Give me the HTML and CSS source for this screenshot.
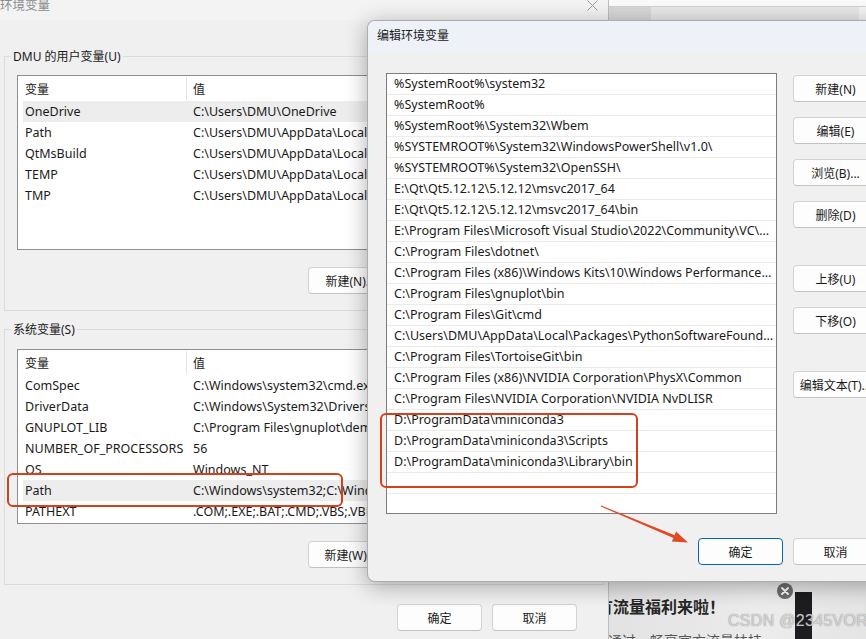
FILE: index.html
```html
<!DOCTYPE html>
<html lang="zh-CN">
<head>
    <meta charset="UTF-8">
    <title>编辑环境变量</title>
    <link rel="stylesheet" href="styles.css">
</head>
<body>
<div class="desk">

    <!-- background window: 环境变量 -->
    <div class="env">
        <div class="win-title">
            <span class="cjk">环境变量</span>
            <svg class="close" width="11" height="11" viewBox="0 0 11 11"><path d="M0.5 0.5L10.5 10.5M10.5 0.5L0.5 10.5" stroke="#9c9c9c" stroke-width="1"/></svg>
        </div>
        <div class="env-body">
            <fieldset class="group user">
                <legend>DMU <span class="cjk">的用户变量</span>(U)</legend>
                <div class="list">
                    <div class="head"><span class="c1 cjk">变量</span><span class="c2 cjk">值</span></div>
                    <div class="row sel"><span class="c1">OneDrive</span><span class="c2">C:\Users\DMU\OneDrive</span></div>
                    <div class="row"><span class="c1">Path</span><span class="c2">C:\Users\DMU\AppData\Local\Microsoft\WindowsApps;</span></div>
                    <div class="row"><span class="c1">QtMsBuild</span><span class="c2">C:\Users\DMU\AppData\Local\QtMsBuild</span></div>
                    <div class="row"><span class="c1">TEMP</span><span class="c2">C:\Users\DMU\AppData\Local\Temp</span></div>
                    <div class="row"><span class="c1">TMP</span><span class="c2">C:\Users\DMU\AppData\Local\Temp</span></div>
                </div>
                <div class="btn-row">
                    <button class="btn">新建(N)...</button>
                    <button class="btn">编辑(E)...</button>
                    <button class="btn">删除(D)</button>
                </div>
            </fieldset>

            <fieldset class="group sys">
                <legend><span class="cjk">系统变量</span>(S)</legend>
                <div class="list">
                    <div class="head"><span class="c1 cjk">变量</span><span class="c2 cjk">值</span></div>
                    <div class="row"><span class="c1">ComSpec</span><span class="c2">C:\Windows\system32\cmd.exe</span></div>
                    <div class="row"><span class="c1">DriverData</span><span class="c2">C:\Windows\System32\Drivers\DriverData</span></div>
                    <div class="row"><span class="c1">GNUPLOT_LIB</span><span class="c2">C:\Program Files\gnuplot\demo;C:\Program Files\gnuplot\demo\games</span></div>
                    <div class="row"><span class="c1">NUMBER_OF_PROCESSORS</span><span class="c2">56</span></div>
                    <div class="row"><span class="c1">OS</span><span class="c2">Windows_NT</span></div>
                    <div class="row sel"><span class="c1">Path</span><span class="c2">C:\Windows\system32;C:\Windows;C:\Windows\System32\Wbem</span></div>
                    <div class="row"><span class="c1">PATHEXT</span><span class="c2">.COM;.EXE;.BAT;.CMD;.VBS;.VBE;.JS;.JSE;.WSF;.WSH;.MSC</span></div>
                </div>
                <div class="btn-row">
                    <button class="btn">新建(W)...</button>
                    <button class="btn">编辑(I)...</button>
                    <button class="btn">删除(L)</button>
                </div>
            </fieldset>

            <div class="env-foot">
                <button class="btn">确定</button>
                <button class="btn">取消</button>
            </div>
        </div>
    </div>

    <!-- browser behind, right side -->
    <div class="browser">
        <div class="tabs"></div>
        <div class="toolbar"></div>
        <div class="page">
            <div class="promo-title">有流量福利来啦！</div>
            <div class="promo-sub">通过，畅享官方流量扶持</div>
            <div class="ad-close">
                <svg width="8" height="8" viewBox="0 0 8 8"><path d="M1 1L7 7M7 1L1 7" stroke="#fff" stroke-width="1.8" stroke-linecap="round"/></svg>
            </div>
            <div class="ad-bar"></div>
        </div>
    </div>

    <!-- dialog: 编辑环境变量 -->
    <div class="edit">
        <div class="edit-title">编辑环境变量</div>
        <div class="edit-body">
            <div class="edit-main">
                <div class="path-list">
                    <div class="item">%SystemRoot%\system32</div>
                    <div class="item">%SystemRoot%</div>
                    <div class="item">%SystemRoot%\System32\Wbem</div>
                    <div class="item">%SYSTEMROOT%\System32\WindowsPowerShell\v1.0\</div>
                    <div class="item">%SYSTEMROOT%\System32\OpenSSH\</div>
                    <div class="item">E:\Qt\Qt5.12.12\5.12.12\msvc2017_64</div>
                    <div class="item">E:\Qt\Qt5.12.12\5.12.12\msvc2017_64\bin</div>
                    <div class="item">E:\Program Files\Microsoft Visual Studio\2022\Community\VC\Tools\MSVC\14.36.32532\bin\Hostx64\x64</div>
                    <div class="item">C:\Program Files\dotnet\</div>
                    <div class="item">C:\Program Files (x86)\Windows Kits\10\Windows Performance Toolkit\</div>
                    <div class="item">C:\Program Files\gnuplot\bin</div>
                    <div class="item">C:\Program Files\Git\cmd</div>
                    <div class="item">C:\Users\DMU\AppData\Local\Packages\PythonSoftwareFoundation.Python.3.11_qbz5n2kfra8p0\LocalCache\local-packages\Python311\Scripts</div>
                    <div class="item">C:\Program Files\TortoiseGit\bin</div>
                    <div class="item">C:\Program Files (x86)\NVIDIA Corporation\PhysX\Common</div>
                    <div class="item">C:\Program Files\NVIDIA Corporation\NVIDIA NvDLISR</div>
                    <div class="item">D:\ProgramData\miniconda3</div>
                    <div class="item">D:\ProgramData\miniconda3\Scripts</div>
                    <div class="item">D:\ProgramData\miniconda3\Library\bin</div>
                    <div class="item"></div>
                </div>
                <div class="side-btns">
                    <button class="btn">新建(N)</button>
                    <button class="btn">编辑(E)</button>
                    <button class="btn">浏览(B)...</button>
                    <button class="btn">删除(D)</button>
                    <button class="btn spaced">上移(U)</button>
                    <button class="btn">下移(O)</button>
                    <button class="btn spaced">编辑文本(T)...</button>
                </div>
            </div>
            <div class="edit-foot">
                <button class="btn primary">确定</button>
                <button class="btn">取消</button>
            </div>
        </div>
    </div>

    <!-- annotations drawn on top of the screenshot -->
    <div class="mark mark-path"></div>
    <div class="mark mark-conda"></div>
    <svg class="arrow" width="866" height="639" viewBox="0 0 866 639">
        <polygon points="601.2,505.5 674.7,535.2 676.0,531.5 688,542.5 671.8,541.6 673.5,538.0 600.8,506.5" fill="#e04a24"/>
    </svg>
    <div class="watermark">CSDN @2345VOR</div>
</div>
</body>
</html>
```

FILE: styles.css
```css
body {
    margin: 0;
    font-family: "Noto Sans", "Noto Sans CJK SC", sans-serif;
    font-size: 12.5px;
    color: #1a1a1a;
    background: #f0f0f0;
}
.cjk {
    font-family: "Noto Sans CJK SC", sans-serif;
    font-size: 12px;
}
.desk {
    position: relative;
    width: 866px;
    height: 639px;
    overflow: hidden;
}

/* buttons */
.btn {
    width: 85px;
    height: 27px;
    box-sizing: border-box;
    padding: 0;
    border: 1px solid #d3d3d3;
    border-bottom-color: #c2c2c2;
    border-radius: 4px;
    background: #fdfdfd;
    font-family: "Noto Sans", "Noto Sans CJK SC", sans-serif;
    font-size: 12px;
    color: #1a1a1a;
    white-space: nowrap;
}
.btn.primary {
    border: 1px solid #0067c0;
}

/* background window */
.env {
    position: absolute;
    left: 0;
    top: -10px;
    width: 608px;
    height: 649px;
    background: #f0f0f0;
}
.win-title {
    height: 30px;
    display: flex;
    align-items: center;
    justify-content: space-between;
    padding-right: 10px;
    background: #f3f3f3;
    color: #8c8c8c;
}
.win-title .cjk {
    font-size: 12.5px;
    margin-top: -2px;
}
.env-body {
    padding: 28px 4px 0 4px;
}
.group {
    margin: 0;
    min-width: 0;
    border: 1px solid #dcdcdc;
    padding: 10px 22px 16px 12px;
}
.group.sys {
    margin-top: 10px;
    padding-top: 11px;
}
.group legend {
    padding: 0 2px;
    margin-left: -6px;
    line-height: 16px;
    font-size: 12px;
}
.list {
    height: 175px;
    box-sizing: border-box;
    border: 1px solid #8f8f8f;
    background: #fff;
    overflow: hidden;
}
.list .head {
    height: 25px;
    display: flex;
    align-items: center;
    padding-left: 7px;
}
.list .head .c1 {
    width: 161px;
    height: 23px;
    line-height: 23px;
    border-right: 1px solid #e3e3e3;
}
.list .head .c2 {
    padding-left: 6px;
}
.list .row {
    height: 21px;
    display: flex;
    align-items: center;
    margin-left: 5px;
    padding-left: 2px;
    white-space: nowrap;
}
.list .row.sel {
    background: #ededed;
}
.list .c1 {
    width: 168px;
    flex-shrink: 0;
}
.list .c2 {
    white-space: nowrap;
}
.btn-row {
    display: flex;
    justify-content: flex-end;
    gap: 9px;
    margin-top: 17px;
}
.env-foot {
    display: flex;
    justify-content: flex-end;
    gap: 10px;
    margin-top: 19px;
    padding-right: 27px;
}

/* browser window on the right */
.browser {
    position: absolute;
    left: 608px;
    top: 0;
    width: 258px;
    height: 639px;
    border-left: 1px solid #bdbdbd;
    display: flex;
    flex-direction: column;
}
.tabs {
    height: 6px;
    background: #fafafa;
    border-bottom: 1px solid #d2d2d2;
}
.toolbar {
    height: 13px;
    background: linear-gradient(90deg, #d8d8d8 0 42px, #e7e7e7 42px 250px, #f3f3f3 250px);
    border-bottom: 1px solid #a9a9a9;
}
.page {
    position: relative;
    flex: 1;
    display: flex;
    flex-direction: column;
    justify-content: flex-end;
    overflow: hidden;
    background: linear-gradient(90deg, #e2e2e2, #ececec 60%, #e4e4e4);
    font-family: "Noto Sans CJK SC", sans-serif;
}
.promo-title {
    margin-left: -12px;
    font-size: 16px;
    font-weight: bold;
    line-height: 20px;
    color: #262626;
}
.promo-sub {
    margin: 15px 0 -10px -1px;
    font-size: 14px;
    line-height: 18px;
    color: #555;
    white-space: nowrap;
}
.ad-close {
    position: absolute;
    left: 168px;
    bottom: 40px;
    width: 16px;
    height: 16px;
    border-radius: 50%;
    background: #6d6d6d;
    display: flex;
    align-items: center;
    justify-content: center;
}
.ad-bar {
    position: absolute;
    left: 186px;
    bottom: 0;
    width: 17px;
    height: 47px;
    background: #1d1d1f;
}

/* edit dialog */
.edit {
    position: absolute;
    left: 367px;
    top: 20px;
    width: 520px;
    height: 562px;
    box-sizing: border-box;
    border: 1px solid rgba(0, 0, 0, 0.28);
    border-radius: 8px;
    background: #f0f0f0;
    box-shadow: 0 4px 22px rgba(0, 0, 0, 0.32);
    overflow: hidden;
}
.edit-title {
    height: 31px;
    line-height: 27px;
    padding-left: 9px;
    background: #eef2f8;
    font-family: "Noto Sans CJK SC", sans-serif;
    font-size: 12px;
}
.edit-body {
    padding: 21px 0 0 18px;
}
.edit-main {
    display: flex;
    gap: 16px;
}
.path-list {
    width: 391px;
    height: 441px;
    box-sizing: border-box;
    border: 1px solid #7d7d7d;
    background: #fff;
    overflow: hidden;
}
.path-list .item {
    height: 20px;
    line-height: 20px;
    padding: 0 2px 0 7px;
    border-bottom: 1px solid #ebebeb;
    white-space: nowrap;
    overflow: hidden;
    text-overflow: ellipsis;
}
.side-btns {
    display: flex;
    flex-direction: column;
    gap: 15px;
    padding-top: 2px;
}
.side-btns .spaced {
    margin-top: 22px;
}
.edit-foot {
    width: 492px;
    display: flex;
    justify-content: flex-end;
    gap: 10px;
    margin-top: 24px;
}

/* annotations */
.mark {
    position: absolute;
    border: 2px solid #d6401c;
    border-radius: 6px;
}
.mark-path {
    left: 7px;
    top: 473px;
    width: 332px;
    height: 30px;
}
.mark-conda {
    left: 380px;
    top: 413px;
    width: 254px;
    height: 71px;
}
.arrow {
    position: absolute;
    left: 0;
    top: 0;
}
.watermark {
    position: absolute;
    left: 728px;
    top: 612px;
    white-space: nowrap;
    font-family: "Liberation Sans", sans-serif;
    font-size: 16px;
    letter-spacing: 0.3px;
    color: rgba(255, 255, 255, 0.7);
    text-shadow: 0 0 1px rgba(80, 80, 80, 0.9);
}
```
